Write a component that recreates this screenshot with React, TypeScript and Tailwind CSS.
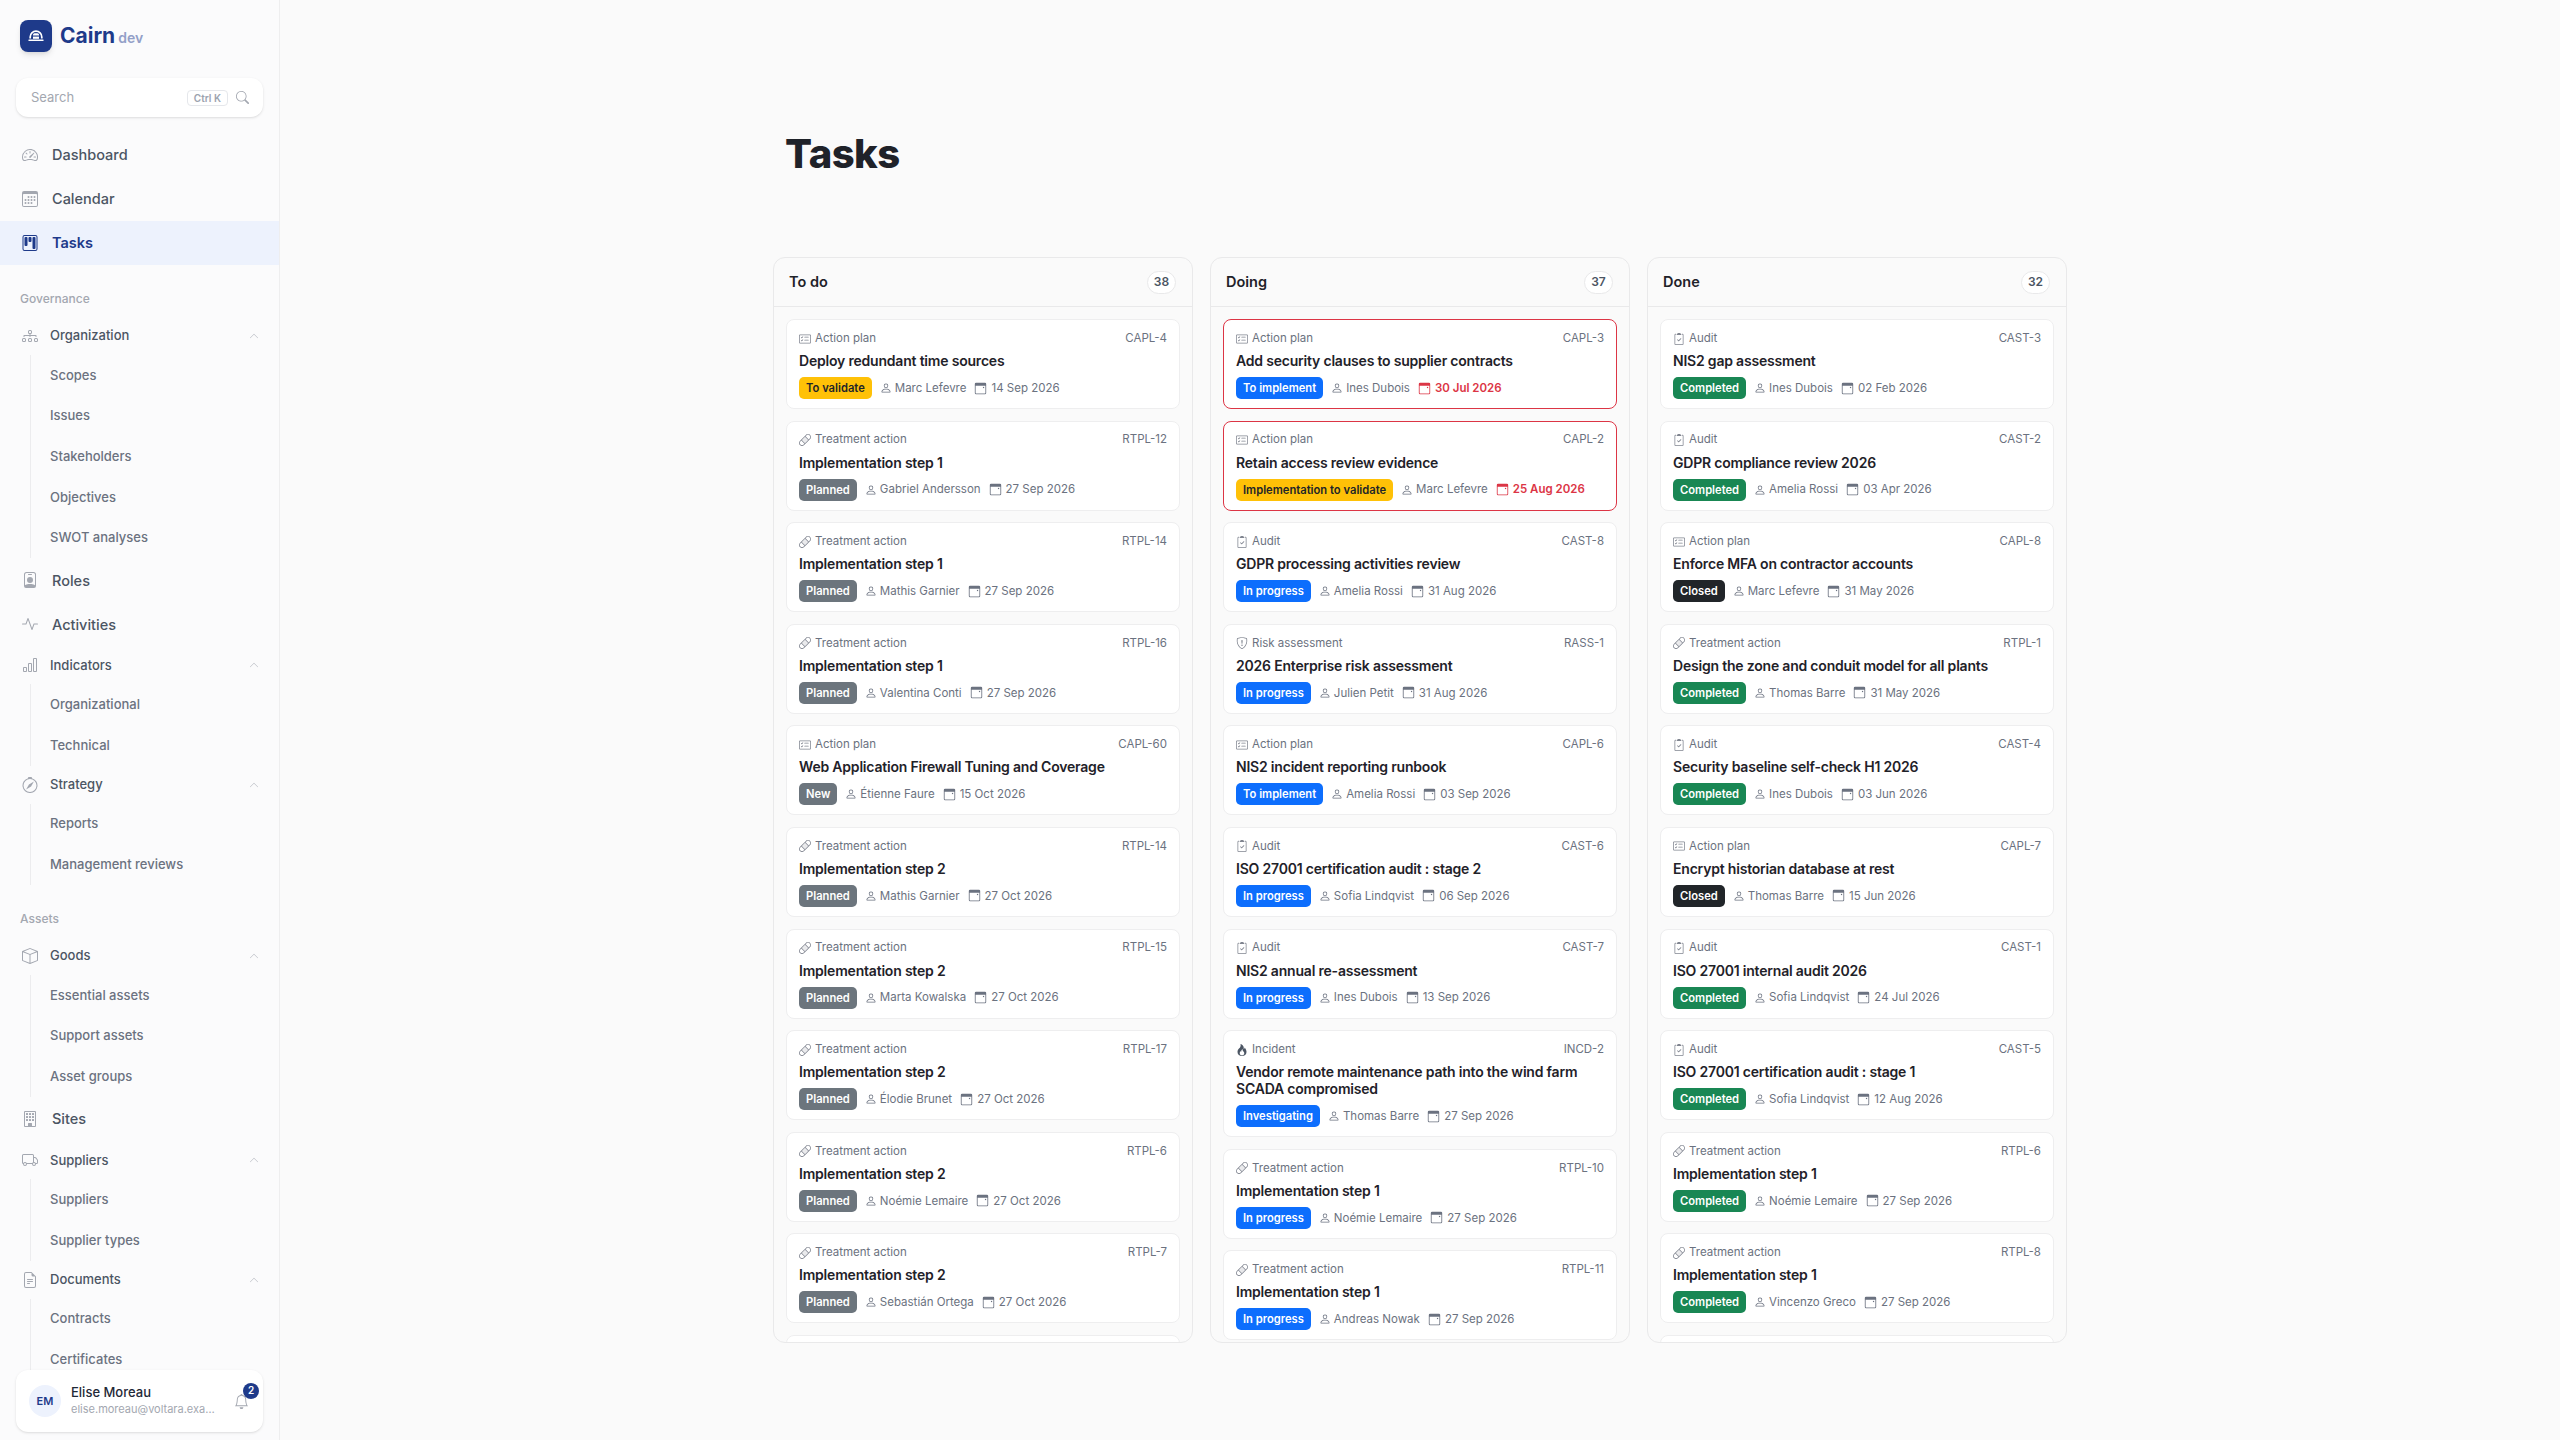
import {
  BsActivity,
  BsBandaid,
  BsBarChart,
  BsBell,
  BsBox,
  BsBuilding,
  BsCalendar3,
  BsCardChecklist,
  BsChevronUp,
  BsClipboard2Check,
  BsCompass,
  BsDiagram3,
  BsFileEarmarkText,
  BsFire,
  BsKanban,
  BsPerson,
  BsPersonBadge,
  BsSearch,
  BsShieldExclamation,
  BsSpeedometer2,
  BsTruck,
} from 'react-icons/bs';
import type { IconType } from 'react-icons';

const font = 'font-["Inter",sans-serif]';

const kinds: Record<string, { label: string; icon: IconType }> = {
  plan: { label: 'Action plan', icon: BsCardChecklist },
  treat: { label: 'Treatment action', icon: BsBandaid },
  audit: { label: 'Audit', icon: BsClipboard2Check },
  risk: { label: 'Risk assessment', icon: BsShieldExclamation },
  incident: { label: 'Incident', icon: BsFire },
};

const badges: Record<string, string> = {
  'To validate': 'bg-[#ffc107] text-[#212529]',
  'Implementation to validate': 'bg-[#ffc107] text-[#212529]',
  Planned: 'bg-[#6c757d] text-white',
  New: 'bg-[#6c757d] text-white',
  'To implement': 'bg-[#0d6efd] text-white',
  'In progress': 'bg-[#0d6efd] text-white',
  Investigating: 'bg-[#0d6efd] text-white',
  Completed: 'bg-[#198754] text-white',
  Closed: 'bg-[#212529] text-white',
};

type Task = [string, string, string, string, string, string, boolean?];

const columns: { title: string; count: number; more: boolean; tasks: Task[] }[] = [
  {
    title: 'To do',
    count: 38,
    more: true,
    tasks: [
      ['plan', 'CAPL-4', 'Deploy redundant time sources', 'To validate', 'Marc Lefevre', '14 Sep 2026'],
      ['treat', 'RTPL-12', 'Implementation step 1', 'Planned', 'Gabriel Andersson', '27 Sep 2026'],
      ['treat', 'RTPL-14', 'Implementation step 1', 'Planned', 'Mathis Garnier', '27 Sep 2026'],
      ['treat', 'RTPL-16', 'Implementation step 1', 'Planned', 'Valentina Conti', '27 Sep 2026'],
      ['plan', 'CAPL-60', 'Web Application Firewall Tuning and Coverage', 'New', 'Étienne Faure', '15 Oct 2026'],
      ['treat', 'RTPL-14', 'Implementation step 2', 'Planned', 'Mathis Garnier', '27 Oct 2026'],
      ['treat', 'RTPL-15', 'Implementation step 2', 'Planned', 'Marta Kowalska', '27 Oct 2026'],
      ['treat', 'RTPL-17', 'Implementation step 2', 'Planned', 'Élodie Brunet', '27 Oct 2026'],
      ['treat', 'RTPL-6', 'Implementation step 2', 'Planned', 'Noémie Lemaire', '27 Oct 2026'],
      ['treat', 'RTPL-7', 'Implementation step 2', 'Planned', 'Sebastián Ortega', '27 Oct 2026'],
    ],
  },
  {
    title: 'Doing',
    count: 37,
    more: false,
    tasks: [
      ['plan', 'CAPL-3', 'Add security clauses to supplier contracts', 'To implement', 'Ines Dubois', '30 Jul 2026', true],
      ['plan', 'CAPL-2', 'Retain access review evidence', 'Implementation to validate', 'Marc Lefevre', '25 Aug 2026', true],
      ['audit', 'CAST-8', 'GDPR processing activities review', 'In progress', 'Amelia Rossi', '31 Aug 2026'],
      ['risk', 'RASS-1', '2026 Enterprise risk assessment', 'In progress', 'Julien Petit', '31 Aug 2026'],
      ['plan', 'CAPL-6', 'NIS2 incident reporting runbook', 'To implement', 'Amelia Rossi', '03 Sep 2026'],
      ['audit', 'CAST-6', 'ISO 27001 certification audit : stage 2', 'In progress', 'Sofia Lindqvist', '06 Sep 2026'],
      ['audit', 'CAST-7', 'NIS2 annual re-assessment', 'In progress', 'Ines Dubois', '13 Sep 2026'],
      ['incident', 'INCD-2', 'Vendor remote maintenance path into the wind farm SCADA compromised', 'Investigating', 'Thomas Barre', '27 Sep 2026'],
      ['treat', 'RTPL-10', 'Implementation step 1', 'In progress', 'Noémie Lemaire', '27 Sep 2026'],
      ['treat', 'RTPL-11', 'Implementation step 1', 'In progress', 'Andreas Nowak', '27 Sep 2026'],
    ],
  },
  {
    title: 'Done',
    count: 32,
    more: true,
    tasks: [
      ['audit', 'CAST-3', 'NIS2 gap assessment', 'Completed', 'Ines Dubois', '02 Feb 2026'],
      ['audit', 'CAST-2', 'GDPR compliance review 2026', 'Completed', 'Amelia Rossi', '03 Apr 2026'],
      ['plan', 'CAPL-8', 'Enforce MFA on contractor accounts', 'Closed', 'Marc Lefevre', '31 May 2026'],
      ['treat', 'RTPL-1', 'Design the zone and conduit model for all plants', 'Completed', 'Thomas Barre', '31 May 2026'],
      ['audit', 'CAST-4', 'Security baseline self-check H1 2026', 'Completed', 'Ines Dubois', '03 Jun 2026'],
      ['plan', 'CAPL-7', 'Encrypt historian database at rest', 'Closed', 'Thomas Barre', '15 Jun 2026'],
      ['audit', 'CAST-1', 'ISO 27001 internal audit 2026', 'Completed', 'Sofia Lindqvist', '24 Jul 2026'],
      ['audit', 'CAST-5', 'ISO 27001 certification audit : stage 1', 'Completed', 'Sofia Lindqvist', '12 Aug 2026'],
      ['treat', 'RTPL-6', 'Implementation step 1', 'Completed', 'Noémie Lemaire', '27 Sep 2026'],
      ['treat', 'RTPL-8', 'Implementation step 1', 'Completed', 'Vincenzo Greco', '27 Sep 2026'],
    ],
  },
];

function TopItem({ icon: Icon, label, active }: { icon: IconType; label: string; active?: boolean }) {
  return (
    <div className={`flex h-11 items-center text-[14.5px] font-medium ${active ? 'bg-[#edf2fd] font-semibold text-[#1e3a8a]' : 'text-[#4b5563]'}`}>
      <Icon className={`ml-[22px] mr-[14px] size-4 ${active ? 'text-[#1e3a8a]' : 'text-[#a3a7b0]'}`} />
      {label}
    </div>
  );
}

function Group({ icon: Icon, label, items }: { icon: IconType; label: string; items: string[] }) {
  return (
    <div>
      <div className="flex h-[38px] items-center text-[13px] font-medium text-[#4b5563]">
        <Icon className="ml-[22px] mr-3 size-4 text-[#a3a7b0]" />
        {label}
        <BsChevronUp className="ml-auto mr-5 size-[10px] text-[#b4b7be]" />
      </div>
      <div className="ml-[30px] border-l border-[#ececee]">
        {items.map((item) => (
          <div key={item} className="flex h-[40.7px] items-center pl-[19px] text-[13px] font-medium text-[#6b7280]">
            {item}
          </div>
        ))}
      </div>
    </div>
  );
}

function SectionLabel({ children }: { children: string }) {
  return <div className="mb-2 mt-6 flex h-5 items-center pl-5 text-xs font-medium text-[#a3a7b0]">{children}</div>;
}

function Sidebar() {
  return (
    <aside className="relative h-screen w-[280px] shrink-0 overflow-hidden border-r border-[#eeeeef] bg-[#fbfbfc]">
      <div className="flex h-[72px] items-center pl-5">
        <div className="flex size-8 items-center justify-center rounded-lg bg-[#1e3a8a] shadow-md">
          <svg viewBox="0 0 20 20" className="size-5">
            <path d="M4.200 12.500V11a5.800 5.800 0 0 1 11.600 0v1.500" fill="none" stroke="#fff" strokeWidth="1.700" />
            <path d="M7 8.800a1.500 1.500 0 0 1 1.500-1.500h3A1.500 1.500 0 0 1 13 8.800v.7H7z" fill="#fff" />
            <rect x="7" y="10.600" width="6" height="2.200" fill="#fff" />
            <path d="M3 14.200h14" stroke="#fff" strokeWidth="1.400" strokeLinecap="round" />
          </svg>
        </div>
        <span className="ml-2 text-[21px] font-bold text-[#1e3a8a]">Cairn</span>
        <span className="ml-[3px] mt-1 text-sm font-semibold text-[#93a0c8]">dev</span>
      </div>
      <div className="mx-4 mt-[6px] flex h-[39px] items-center rounded-xl bg-white pl-[15px] pr-[14px] shadow-sm">
        <span className="text-[13px] text-[#a3a7b0]">Search</span>
        <span className="ml-auto rounded border border-[#e5e7eb] px-[6px] text-[10px] font-semibold leading-[14px] text-[#9ca3af]">Ctrl K</span>
        <BsSearch className="ml-2 size-[13px] text-[#a3a7b0]" />
      </div>
      <nav className="mt-4">
        <TopItem icon={BsSpeedometer2} label="Dashboard" />
        <TopItem icon={BsCalendar3} label="Calendar" />
        <TopItem icon={BsKanban} label="Tasks" active />
        <SectionLabel>Governance</SectionLabel>
        <Group icon={BsDiagram3} label="Organization" items={['Scopes', 'Issues', 'Stakeholders', 'Objectives', 'SWOT analyses']} />
        <TopItem icon={BsPersonBadge} label="Roles" />
        <TopItem icon={BsActivity} label="Activities" />
        <Group icon={BsBarChart} label="Indicators" items={['Organizational', 'Technical']} />
        <Group icon={BsCompass} label="Strategy" items={['Reports', 'Management reviews']} />
        <SectionLabel>Assets</SectionLabel>
        <Group icon={BsBox} label="Goods" items={['Essential assets', 'Support assets', 'Asset groups']} />
        <TopItem icon={BsBuilding} label="Sites" />
        <Group icon={BsTruck} label="Suppliers" items={['Suppliers', 'Supplier types']} />
        <Group icon={BsFileEarmarkText} label="Documents" items={['Contracts', 'Certificates']} />
      </nav>
      <div className="absolute bottom-2 left-4 right-4 flex h-[62px] items-center rounded-xl bg-white pl-[13px] pr-[14px] shadow-sm">
        <div className="flex size-8 shrink-0 items-center justify-center rounded-full bg-[#edf2fd] text-[11px] font-semibold text-[#1e3a8a]">EM</div>
        <div className="ml-[10px] min-w-0 flex-1">
          <div className="text-[13px] font-medium leading-[17px] text-[#1f2937]">Elise Moreau</div>
          <div className="truncate text-[11px] leading-[17px] text-[#a3a7b0]">elise.moreau@voltara.example</div>
        </div>
        <div className="relative ml-[14px]">
          <BsBell className="size-[15px] text-[#a3a7b0]" />
          <span className="absolute -right-[10px] -top-[11px] flex size-4 items-center justify-center rounded-full bg-[#1e3a8a] text-[10px] font-semibold text-white">2</span>
        </div>
      </div>
    </aside>
  );
}

function DueIcon({ late }: { late?: boolean }) {
  return (
    <svg viewBox="0 0 16 16" className={`ml-2 mr-1 size-[13px] shrink-0 ${late ? 'text-[#dc3545]' : 'text-[#6b7280]'}`} fill="currentColor">
      <path d="M2.500 1A1.500 1.500 0 0 0 1 2.500v11A1.500 1.500 0 0 0 2.500 15h11a1.500 1.500 0 0 0 1.500-1.500v-11A1.500 1.500 0 0 0 13.500 1zM2 4.500h12v9a.5.5 0 0 1-.5.5h-11a.5.5 0 0 1-.5-.5z" />
      <rect x="11" y="6" width="1.500" height="1.500" />
    </svg>
  );
}

function Card({ task }: { task: Task }) {
  const [kind, ref, title, status, owner, date, late] = task;
  const { label, icon: Icon } = kinds[kind];
  return (
    <div className={`shrink-0 rounded-lg border bg-white px-3 pb-[9px] pt-[11px] ${late ? 'border-[#dc3545]' : 'border-[#eeeeef]'}`}>
      <div className="flex h-[15px] items-center text-[11.5px] text-[#6b7280]">
        <Icon className={`mr-1 size-3 ${kind === 'incident' ? 'text-[#4b5563]' : 'text-[#808590]'}`} />
        <span>{label}</span>
        <span className="ml-auto">{ref}</span>
      </div>
      <div className="mt-[6px] text-sm font-semibold leading-[17px] tracking-[-0.2px] text-[#1f2229]">{title}</div>
      <div className="mt-2 flex h-[22px] items-center text-[11.5px] text-[#6b7280]">
        <span className={`flex h-[22px] items-center rounded-[5px] px-[7px] pt-px text-[11.2px] font-semibold ${badges[status]}`}>{status}</span>
        <BsPerson className="ml-2 mr-[3px] size-3" />
        <span className="pt-px">{owner}</span>
        <DueIcon late={late} />
        <span className={`pt-px ${late ? 'font-semibold text-[#dc3545]' : ''}`}>{date}</span>
      </div>
    </div>
  );
}

export default function App() {
  return (
    <div className={`flex h-screen overflow-hidden bg-[#fafafa] ${font}`}>
      <Sidebar />
      <main className="flex min-w-0 flex-1 justify-center">
        <div className="w-[1294px]">
          <h1 className="ml-[12px] mt-[129px] text-[40px] font-extrabold leading-[50px] tracking-[-0.5px] text-[#1f2229]">Tasks</h1>
          <div className="mt-[78px] flex h-[1086px] gap-[17px]">
            {columns.map((col) => (
              <section key={col.title} className="flex min-w-0 flex-1 flex-col overflow-hidden rounded-xl border border-[#e9e9ea]">
                <header className="flex h-[49px] shrink-0 items-center justify-between border-b border-[#e9e9ea] pl-[15px] pr-[16px]">
                  <span className="text-[14.5px] font-semibold text-[#1f2229]">{col.title}</span>
                  <span className="flex h-[23px] w-[29px] items-center justify-center rounded-full border border-[#e9e9ea] bg-white text-xs font-semibold text-[#4b5563]">{col.count}</span>
                </header>
                <div className="flex min-h-0 flex-1 flex-col gap-[11.6px] overflow-hidden px-3 pt-3">
                  {col.tasks.map((task) => (
                    <Card key={task[1] + task[2]} task={task} />
                  ))}
                  {col.more && <div className="h-[90px] shrink-0 rounded-lg border border-[#eeeeef] bg-white" />}
                </div>
              </section>
            ))}
          </div>
        </div>
      </main>
    </div>
  );
}
